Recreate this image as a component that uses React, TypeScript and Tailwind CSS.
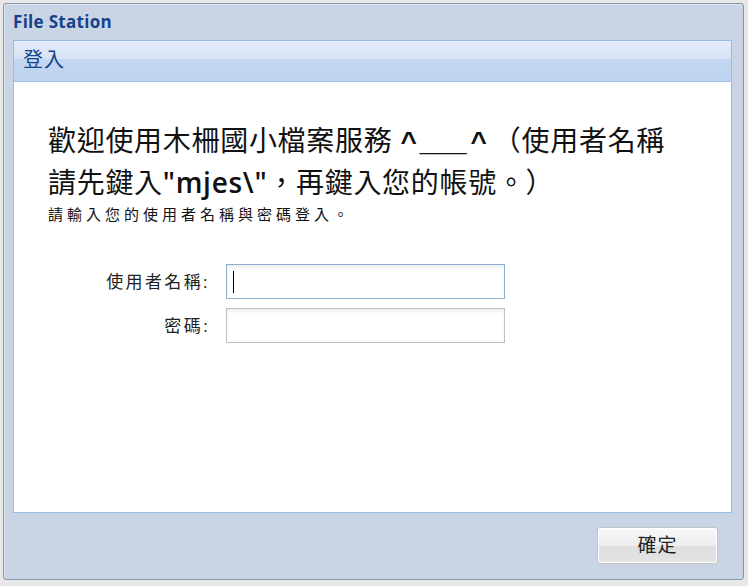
import React from "react";

const cjk = { fontFamily: '"Open Sans", "Noto Sans CJK TC", sans-serif' };

function Field({ label, focused }: { label: string; focused?: boolean }) {
  return (
    <div className="flex items-center">
      <div className="w-[162px] text-right text-[17px] tracking-[2.4px] text-[#222]">{label}</div>
      <div
        className={`relative ml-[16px] h-[35px] w-[279px] border bg-white shadow-[inset_0_3px_3px_rgba(0,0,0,0.06)] ${
          focused ? "border-[#8eaed0]" : "border-[#bcc0c8]"
        }`}
      >
        {focused && <span className="absolute left-[6px] top-[6px] h-[22px] w-px bg-black" />}
      </div>
    </div>
  );
}

export default function App() {
  return (
    <div className="h-[586px] w-[748px] bg-[#e8e8e8] pl-[3px] pt-[3px]" style={cjk}>
      <div className="flex h-[577px] w-[741px] flex-col rounded-[3px] border border-[#8594ab] bg-[#c9d5e4] shadow-[inset_1px_1px_0_#dfe7f1]">
        {/* タイトル */}
        <div className="flex h-[36px] items-center px-[9px] pb-[1px]">
          <span
            className="text-[17px] font-bold tracking-[0.3px] text-[#15428b]"
            style={{ fontFamily: '"Open Sans", sans-serif' }}
          >
            File Station
          </span>
        </div>

        <div className="mx-[9px] flex h-[473px] w-[719px] flex-col border border-[#99bbe8] bg-white">
          <div className="flex h-[41px] items-center border-b border-[#9fbde6] bg-[linear-gradient(#e2ebf8_0%,#d6e3f5_45%,#c3d7f1_46%,#bed3ef_100%)] px-[9px] pb-[2px]">
            <span className="text-[20px] tracking-[1px] text-[#15428b]">登入</span>
          </div>

          <div className="flex-1 px-[34px] pt-[38px]">
            <div className="text-[28px] leading-[40px] tracking-[0.7px] text-[#111]">
              歡迎使用木柵國小檔案服務{" "}
              <span
                className="font-bold tracking-normal"
                style={{ fontFamily: '"Liberation Sans", sans-serif' }}
              >
                <span className="mr-[3px]">^</span>___<span className="ml-[4px]">^</span>
              </span>
              <span className="ml-[6px]">（使用者名稱</span>
              <br />
              請先鍵入<span className="font-semibold">"mjes\"</span>，再鍵入您的帳號。）
            </div>
            <div className="mt-[2px] text-[15px] leading-[20px] tracking-[4px] text-[#111]">
              請輸入您的使用者名稱與密碼登入。
            </div>

            <div className="mt-[40px] flex flex-col gap-[9px]">
              <Field label="使用者名稱:" focused />
              <Field label="密碼:" />
            </div>
          </div>
        </div>

        <div className="flex flex-1 items-start justify-end pr-[25px] pt-[14px]">
          <button className="h-[37px] w-[121px] rounded-[3px] border border-[#c4c4c4] bg-[linear-gradient(#f8f8f8_0%,#eeeeee_50%,#dedede_51%,#e4e4e4_100%)] text-[19px] tracking-[1px] text-[#222] shadow-[inset_0_0_0_1px_#ffffff]">
            確定
          </button>
        </div>
      </div>
    </div>
  );
}
